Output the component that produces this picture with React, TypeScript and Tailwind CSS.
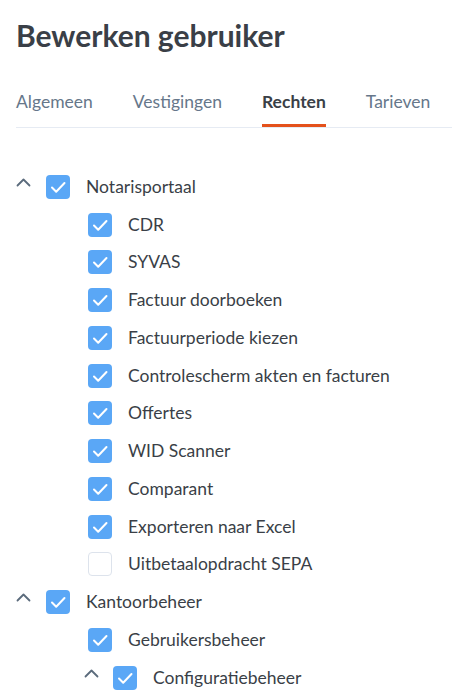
type Node = {
  label: string;
  checked: boolean;
  expanded?: boolean;
  children?: Node[];
};

const tree: Node[] = [
  {
    label: "Notarisportaal",
    checked: true,
    expanded: true,
    children: [
      { label: "CDR", checked: true },
      { label: "SYVAS", checked: true },
      { label: "Factuur doorboeken", checked: true },
      { label: "Factuurperiode kiezen", checked: true },
      { label: "Controlescherm akten en facturen", checked: true },
      { label: "Offertes", checked: true },
      { label: "WID Scanner", checked: true },
      { label: "Comparant", checked: true },
      { label: "Exporteren naar Excel", checked: true },
      { label: "Uitbetaalopdracht SEPA", checked: false },
    ],
  },
  {
    label: "Kantoorbeheer",
    checked: true,
    expanded: true,
    children: [
      { label: "Gebruikersbeheer", checked: true },
      { label: "Configuratiebeheer", checked: true, expanded: true, children: [] },
    ],
  },
];

const tabs = ["Algemeen", "Vestigingen", "Rechten", "Tarieven"];

function Chevron() {
  return (
    <svg width="15" height="9" viewBox="0 0 15 9" fill="none" className="-mt-[9px]">
      <path d="M1.5 7.5L7.5 1.5l6 6" stroke="#5b6b7c" strokeWidth="1.8" strokeLinecap="round" strokeLinejoin="round" />
    </svg>
  );
}

function Checkbox({ checked }: { checked: boolean }) {
  if (!checked) {
    return <span className="h-6 w-6 shrink-0 rounded-[4px] border border-[#dde3ec] bg-white" />;
  }
  return (
    <span className="flex h-6 w-6 shrink-0 items-center justify-center rounded-[4px] bg-[#5aa7f6]">
      <svg width="24" height="24" viewBox="0 0 24 24" fill="none">
        <path d="M6 12.5l4.2 4.2L18.5 8" stroke="white" strokeWidth="2" strokeLinecap="round" strokeLinejoin="round" />
      </svg>
    </span>
  );
}

function TreeRow({ node, depth }: { node: Node; depth: number }) {
  const hasToggle = node.children !== undefined;
  // top level keeps a toggle column; nested rows only get one when they have children
  const pad = depth === 0 ? 0 : hasToggle ? 68 : 72;
  return (
    <>
      <div className="flex h-[37.75px] items-center" style={{ paddingLeft: pad }}>
        {depth === 0 || hasToggle ? (
          <span className={depth === 0 ? "flex w-[30px] shrink-0 items-center" : "flex w-[29px] shrink-0 items-center"}>
            {hasToggle ? <Chevron /> : null}
          </span>
        ) : null}
        <Checkbox checked={node.checked} />
        <span className="ml-4 text-[17.5px] text-[#3a3f47]">{node.label}</span>
      </div>
      {node.expanded && node.children
        ? node.children.map((child) => <TreeRow key={child.label} node={child} depth={depth + 1} />)
        : null}
    </>
  );
}

export default function App() {
  return (
    <div className="h-[699px] overflow-hidden bg-white pl-4 font-['Lato',sans-serif]">
      <h1 className="pt-[14px] text-[30px] font-bold leading-[42px] text-[#3a3f47]">Bewerken gebruiker</h1>

      <nav className="mt-[35px] flex border-b border-[#e6ebf3]">
        {tabs.map((tab) => {
          const active = tab === "Rechten";
          return (
            <div
              key={tab}
              className={
                active
                  ? "mr-[40px] border-b-[3px] border-[#e4511b] pb-[11px] text-[17.5px] font-bold leading-[22px] text-[#3a3f47]"
                  : "mr-[40px] border-b-[3px] border-transparent pb-[11px] text-[17.5px] leading-[22px] text-[#66778a]"
              }
            >
              {tab}
            </div>
          );
        })}
      </nav>

      <div className="mt-[40px]">
        {tree.map((node) => (
          <TreeRow key={node.label} node={node} depth={0} />
        ))}
      </div>
    </div>
  );
}
